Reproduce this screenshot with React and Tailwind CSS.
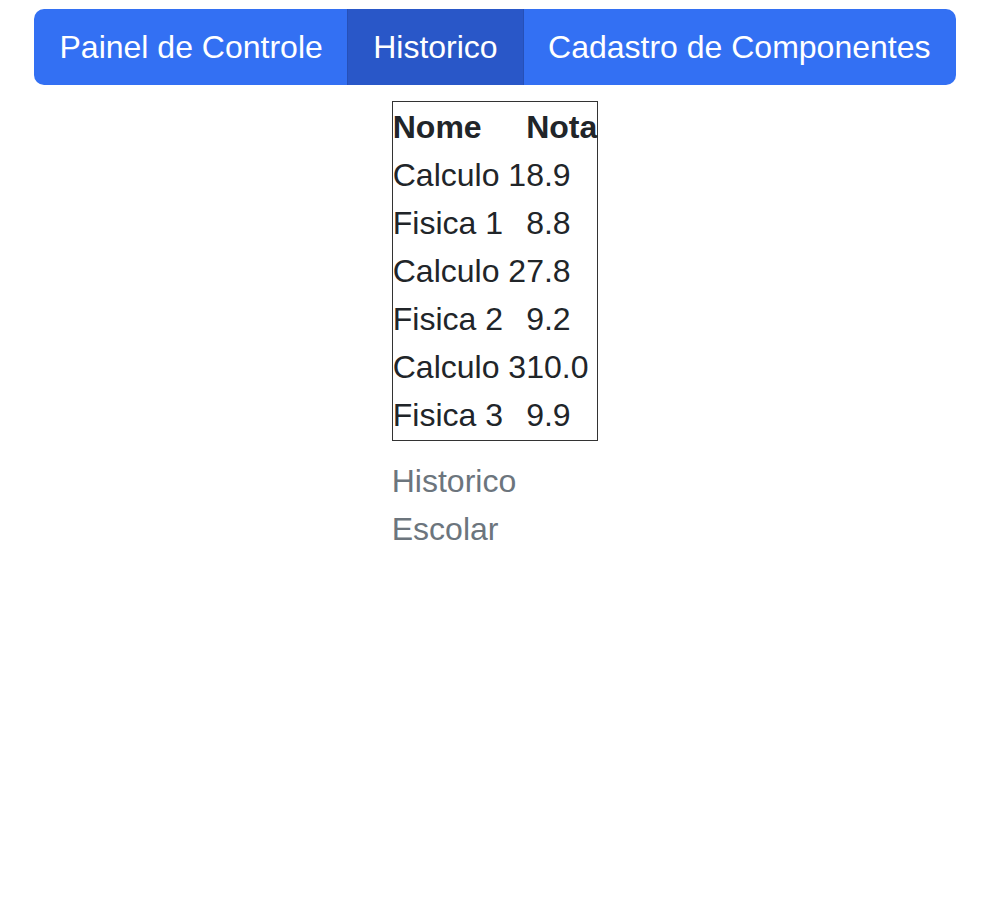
import React from 'react';

const notas = [
  { nome: 'Calculo 1', nota: '8.9' },
  { nome: 'Fisica 1', nota: '8.8' },
  { nome: 'Calculo 2', nota: '7.8' },
  { nome: 'Fisica 2', nota: '9.2' },
  { nome: 'Calculo 3', nota: '10.0' },
  { nome: 'Fisica 3', nota: '9.9' },
];

const links = ['Painel de Controle', 'Historico', 'Cadastro de Componentes'];

export default function App() {
  return (
    <div className="w-[990px] flex flex-col items-center pt-[9px] font-['Liberation_Sans',Arial,sans-serif] text-[32px] leading-[1.5] text-[#212529]">
      {/* menu de navegacao */}
      <nav className="flex rounded-[10px] bg-[#3370f3] overflow-hidden">
        {links.map((l) => (
          <a
            key={l}
            href="#"
            className={
              l === 'Historico'
                ? 'py-[14px] px-[25.2px] text-white bg-[#2957c8] border-x border-[#2650b8] -mx-px'
                : 'py-[14px] px-[25.2px] text-white'
            }
          >
            {l}
          </a>
        ))}
      </nav>

      <table className="mt-4 border border-[#333] caption-bottom border-collapse">
        <thead>
          <tr>
            <th className="p-0 pt-px text-left font-bold">Nome</th>
            <th className="p-0 pt-px text-left font-bold">Nota</th>
          </tr>
        </thead>
        <tbody>
          {notas.map((n, i) => (
            <tr key={n.nome}>
              <td className={i === notas.length - 1 ? 'p-0 pb-px' : 'p-0'}>{n.nome}</td>
              <td className={i === notas.length - 1 ? 'p-0 pb-px' : 'p-0'}>{n.nota}</td>
            </tr>
          ))}
        </tbody>
        <caption className="pt-[16px] text-left text-[#6c757d]">Historico Escolar</caption>
      </table>
    </div>
  );
}
